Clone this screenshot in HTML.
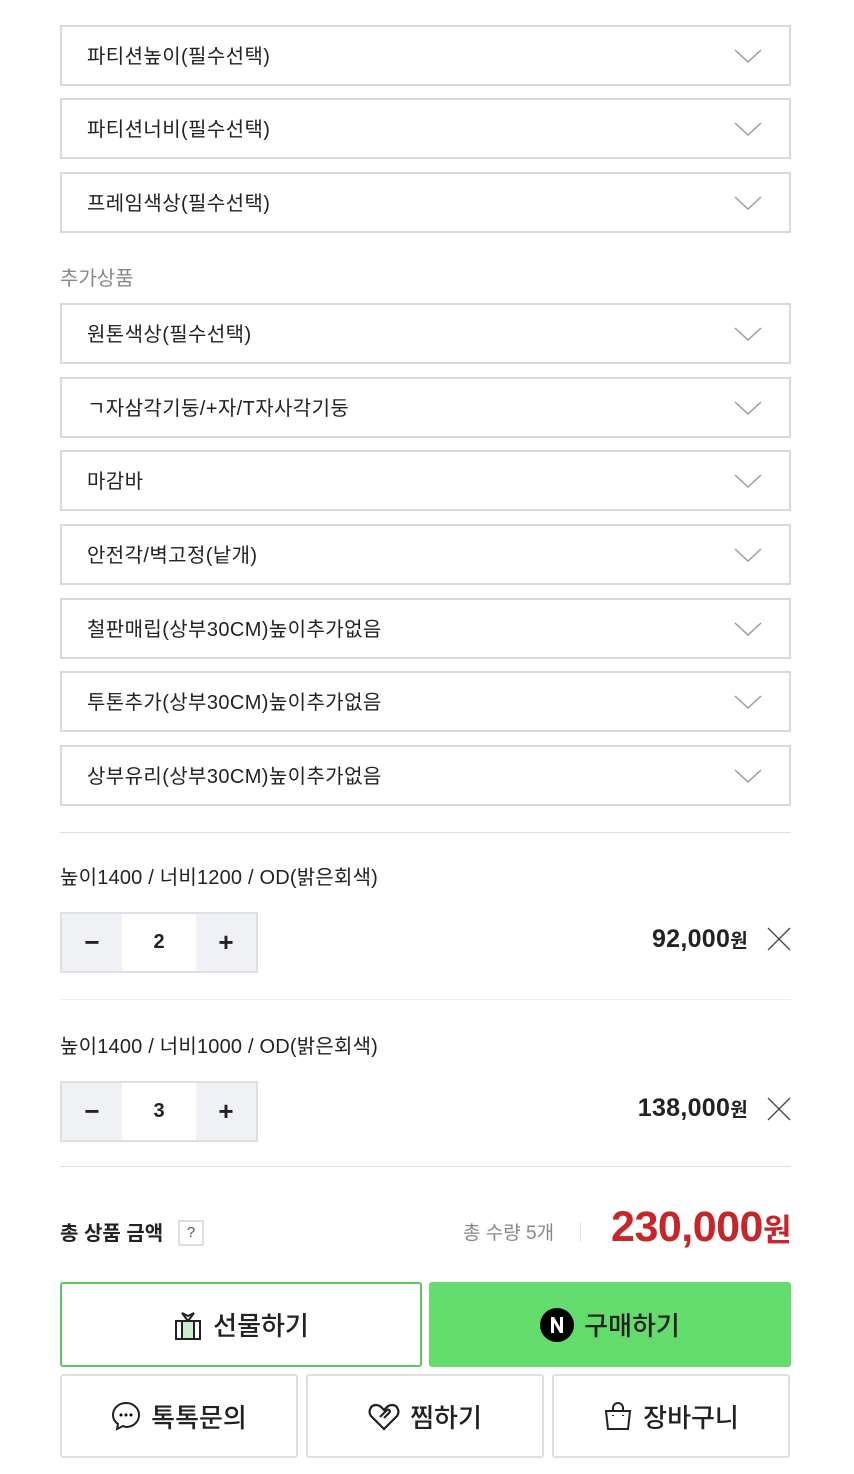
<!DOCTYPE html><html><head><meta charset="utf-8"><style>
*{box-sizing:border-box;margin:0;padding:0}
body{width:854px;height:1474px;background:#fff;font-family:"Liberation Sans","Noto Sans CJK KR",sans-serif;color:#222;position:relative;overflow:hidden}
.a{position:absolute}
.sel{position:absolute;left:60px;width:731px;height:61px;border:2px solid #d7d9dd;font-size:20px;line-height:61px;padding-left:25px;color:#222;letter-spacing:0.4px}
.sel svg{position:absolute;right:27px;top:21px}
.hr{position:absolute;left:60px;width:731px;height:1px;background:#ddd}
.opt{position:absolute;left:60px;font-size:20px;color:#222;letter-spacing:0.2px}
.st{position:absolute;left:60px;width:198px;height:61px;border:2px solid #dfe0e4;display:flex}
.st div{width:60px;background:#f0f1f4;display:flex;align-items:center;justify-content:center;font-size:26px;font-weight:bold}
.st div.m{width:74px;background:#fff;font-size:20px}
.pr{position:absolute;right:106px;font-size:25px;font-weight:bold;color:#222;letter-spacing:0.3px}
.pr span{font-size:19px}
.x{position:absolute;left:767px}
.btn{position:absolute;border-radius:3px;display:flex;align-items:center;justify-content:center;font-size:26px;font-weight:500;gap:10px}
.b2{top:1374px;width:238px;height:84px;border:2px solid #dedede}
</style></head><body>
<div class="sel" style="top:25px">파티션높이(필수선택)<svg width="28" height="16"><path d="M1 2 L14 14 L27 2" fill="none" stroke="#999" stroke-width="1.4"/></svg></div>
<div class="sel" style="top:98px">파티션너비(필수선택)<svg width="28" height="16"><path d="M1 2 L14 14 L27 2" fill="none" stroke="#999" stroke-width="1.4"/></svg></div>
<div class="sel" style="top:172px">프레임색상(필수선택)<svg width="28" height="16"><path d="M1 2 L14 14 L27 2" fill="none" stroke="#999" stroke-width="1.4"/></svg></div>
<div class="a" style="left:60px;top:262px;font-size:20px;color:#888">추가상품</div>
<div class="sel" style="top:303px">원톤색상(필수선택)<svg width="28" height="16"><path d="M1 2 L14 14 L27 2" fill="none" stroke="#999" stroke-width="1.4"/></svg></div>
<div class="sel" style="top:377px">ㄱ자삼각기둥/+자/T자사각기둥<svg width="28" height="16"><path d="M1 2 L14 14 L27 2" fill="none" stroke="#999" stroke-width="1.4"/></svg></div>
<div class="sel" style="top:450px">마감바<svg width="28" height="16"><path d="M1 2 L14 14 L27 2" fill="none" stroke="#999" stroke-width="1.4"/></svg></div>
<div class="sel" style="top:524px">안전각/벽고정(낱개)<svg width="28" height="16"><path d="M1 2 L14 14 L27 2" fill="none" stroke="#999" stroke-width="1.4"/></svg></div>
<div class="sel" style="top:598px">철판매립(상부30CM)높이추가없음<svg width="28" height="16"><path d="M1 2 L14 14 L27 2" fill="none" stroke="#999" stroke-width="1.4"/></svg></div>
<div class="sel" style="top:671px">투톤추가(상부30CM)높이추가없음<svg width="28" height="16"><path d="M1 2 L14 14 L27 2" fill="none" stroke="#999" stroke-width="1.4"/></svg></div>
<div class="sel" style="top:745px">상부유리(상부30CM)높이추가없음<svg width="28" height="16"><path d="M1 2 L14 14 L27 2" fill="none" stroke="#999" stroke-width="1.4"/></svg></div>
<div class="hr" style="top:832px"></div>
<div class="opt" style="top:861px">높이1400 / 너비1200 / OD(밝은회색)</div>
<div class="st" style="top:912px"><div>−</div><div class="m">2</div><div>+</div></div>
<div class="pr" style="top:925px">92,000<span>원</span></div>
<svg class="x" style="top:927px" width="24" height="24"><path d="M1 1L23 23M23 1L1 23" stroke="#444" stroke-width="1.3"/></svg>
<div class="hr" style="top:999px;background:#eee"></div>
<div class="opt" style="top:1030px">높이1400 / 너비1000 / OD(밝은회색)</div>
<div class="st" style="top:1081px"><div>−</div><div class="m">3</div><div>+</div></div>
<div class="pr" style="top:1094px">138,000<span>원</span></div>
<svg class="x" style="top:1097px" width="24" height="24"><path d="M1 1L23 23M23 1L1 23" stroke="#444" stroke-width="1.3"/></svg>
<div class="hr" style="top:1166px"></div>
<div class="a" style="left:60px;top:1217px;font-size:20px;font-weight:bold">총 상품 금액</div>
<div class="a" style="left:178px;top:1220px;width:26px;height:26px;border:2px solid #ddd;font-size:15px;color:#555;text-align:center;line-height:22px">?</div>
<div class="a" style="left:463px;top:1218px;font-size:19px;color:#888">총 수량 5개</div>
<div class="a" style="left:580px;top:1222px;width:1px;height:20px;background:#ddd"></div>
<div class="a" style="right:63px;top:1203px;font-size:43px;font-weight:bold;color:#c6252a;letter-spacing:-0.5px">230,000<span style="font-size:31px">원</span></div>
<div class="btn" style="left:60px;top:1282px;width:362px;height:85px;border:2px solid #5dc662"><svg width="30" height="32" viewBox="0 0 30 32"><rect x="3" y="12" width="24" height="18" fill="none" stroke="#222" stroke-width="2"/><rect x="9" y="13" width="12" height="16" fill="#c8efcc"/><path d="M9 12V30M21 12V30M15 12L9 4L15 7L21 4L15 12" fill="none" stroke="#222" stroke-width="2"/></svg>선물하기</div>
<div class="btn" style="left:429px;top:1282px;width:362px;height:85px;background:#64db6d"><svg width="34" height="34"><circle cx="17" cy="17" r="17" fill="#000"/><path d="M11 25V9h3l6 10V9h3v16h-3l-6-10v10z" fill="#fff"/></svg>구매하기</div>
<div class="btn b2" style="left:60px"><svg width="30" height="30" viewBox="0 0 30 30"><path d="M15 2C8 2 2 7 2 14c0 4 2 7 5 9l-1 5 6-3c1 0 2 1 3 1 7 0 13-5 13-12S22 2 15 2z" fill="none" stroke="#222" stroke-width="2"/><circle cx="10" cy="14" r="1.5"/><circle cx="15" cy="14" r="1.5"/><circle cx="20" cy="14" r="1.5"/></svg>톡톡문의</div>
<div class="btn b2" style="left:306px"><svg width="32" height="30" viewBox="0 0 32 30"><path d="M16 28L3 15C0 11 2 4 8 4c4 0 6 3 8 5 2-2 4-5 8-5 6 0 8 7 5 11L16 28zM12 16l7-7c2-1 4 1 2 3l-5 5" fill="none" stroke="#222" stroke-width="2.2"/></svg>찜하기</div>
<div class="btn b2" style="left:552px"><svg width="30" height="30" viewBox="0 0 30 30"><path d="M3 10h24l-2 18H5zM10 10V7a5 5 0 0110 0v3M10 15v-1M20 15v-1" fill="none" stroke="#222" stroke-width="2"/></svg>장바구니</div>
</body></html>
